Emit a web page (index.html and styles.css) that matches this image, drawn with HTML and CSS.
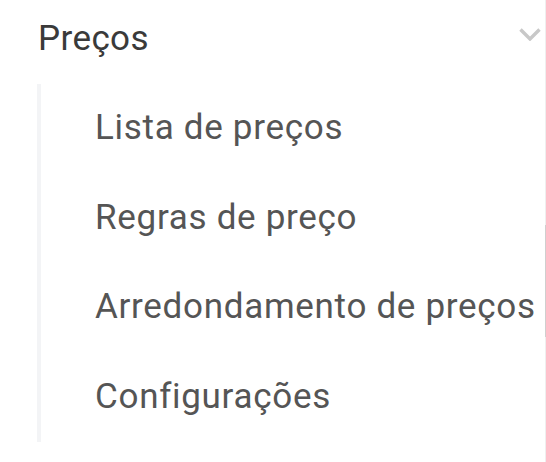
FILE: index.html
```html
<!DOCTYPE html>
<html lang="pt">
<head>
<meta charset="utf-8">
<link rel="stylesheet" href="styles.css">
</head>
<body>
<nav class="menu">
  <div class="group-header">
    <span class="group-title">Preços</span>
    <svg class="chevron" width="22" height="13" viewBox="0 0 22 13" aria-hidden="true">
      <path d="M1.5 1.5 L11 11 L20.5 1.5" fill="none" stroke="#c8c8c8" stroke-width="3.4"/>
    </svg>
  </div>
  <ul class="sub-list">
    <li class="sub-item">Lista de preços</li>
    <li class="sub-item">Regras de preço</li>
    <li class="sub-item">Arredondamento de preços</li>
    <li class="sub-item">Configurações</li>
  </ul>
  <div class="scroll-thumb"></div>
</nav>
</body>
</html>
```

FILE: styles.css
```css
html, body {
  margin: 0;
  padding: 0;
  background: #ffffff;
}

.menu {
  position: relative;
  width: 545px;
  height: 462px;
  border-right: 1px solid #efefef;
  font-family: Roboto, "Liberation Sans", sans-serif;
  font-size: 35px;
}

.group-header {
  display: flex;
  justify-content: space-between;
  align-items: flex-start;
  padding: 17px 4px 0 38px;
  height: 44px;
}

.group-title {
  line-height: 44px;
  color: #3a3a3a;
  letter-spacing: 0.4px;
}

.chevron {
  margin-top: 11px;
}

.sub-list {
  list-style: none;
  margin: 23px 0 0 37px;
  padding: 0;
  border-left: 4px solid #f3f4f6;
}

.sub-item {
  line-height: 41px;
  padding: 23px 0 25.5px 54px;
  color: #555555;
  letter-spacing: 0.7px;
  white-space: nowrap;
}

.scroll-thumb {
  position: absolute;
  right: -1px;
  top: 225px;
  width: 1px;
  height: 112px;
  background: #cfcfcf;
}
```
